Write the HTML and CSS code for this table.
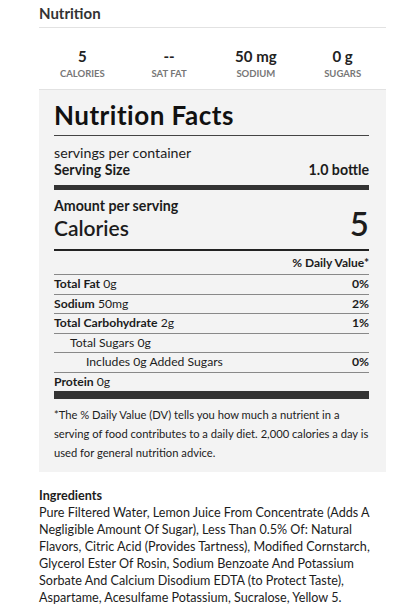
FILE: index.html
```html
<!DOCTYPE html>
<html lang="en">

<head>
    <meta charset="UTF-8">
    <meta name="viewport" content="width=device-width, initial-scale=1.0">
    <title>Nutrition</title>
    <link rel="stylesheet" href="styles.css">
</head>

<body>

    <div class="nutrition">
        <h2 class="section-title">Nutrition</h2>

        <div class="stats">
            <div class="stat">
                <span class="stat-value">5</span>
                <span class="stat-label">Calories</span>
            </div>
            <div class="stat">
                <span class="stat-value">--</span>
                <span class="stat-label">Sat Fat</span>
            </div>
            <div class="stat">
                <span class="stat-value">50 mg</span>
                <span class="stat-label">Sodium</span>
            </div>
            <div class="stat">
                <span class="stat-value">0 g</span>
                <span class="stat-label">Sugars</span>
            </div>
        </div>

        <div class="facts">
            <h1 class="facts-title">Nutrition Facts</h1>

            <div class="servings">
                <p>servings per container</p>
                <div class="line-row bold">
                    <span>Serving Size</span>
                    <span>1.0 bottle</span>
                </div>
            </div>

            <div class="calories">
                <p class="bold">Amount per serving</p>
                <div class="calories-row">
                    <span class="calories-label">Calories</span>
                    <span class="calories-value">5</span>
                </div>
            </div>

            <div class="dv-head bold">% Daily Value*</div>

            <div class="nutrient">
                <span><b>Total Fat</b> 0g</span>
                <b>0%</b>
            </div>
            <div class="nutrient">
                <span><b>Sodium</b> 50mg</span>
                <b>2%</b>
            </div>
            <div class="nutrient">
                <span><b>Total Carbohydrate</b> 2g</span>
                <b>1%</b>
            </div>
            <div class="nutrient indent-1">
                <span>Total Sugars 0g</span>
            </div>
            <div class="nutrient indent-2">
                <span>Includes 0g Added Sugars</span>
                <b>0%</b>
            </div>
            <div class="nutrient last">
                <span><b>Protein</b> 0g</span>
            </div>

            <p class="footnote">*The % Daily Value (DV) tells you how much a nutrient in a serving of food contributes to a daily diet. 2,000 calories a day is used for general nutrition advice.</p>
        </div>

        <div class="ingredients">
            <h3>Ingredients</h3>
            <p>Pure Filtered Water, Lemon Juice From Concentrate (Adds A Negligible Amount Of Sugar), Less Than 0.5% Of: Natural Flavors, Citric Acid (Provides Tartness), Modified Cornstarch, Glycerol Ester Of Rosin, Sodium Benzoate And Potassium Sorbate And Calcium Disodium EDTA (to Protect Taste), Aspartame, Acesulfame Potassium, Sucralose, Yellow 5.</p>
        </div>
    </div>

</body>

</html>
```

FILE: styles.css
```css
body {
    font-family: Lato, "Liberation Sans", sans-serif;
    margin: 0;
    color: #1c1c1c;
    background-color: #fff;
}

p {
    margin: 0;
}

.bold {
    font-weight: 700;
}

.nutrition {
    width: 347px;
    margin-left: 39px;
}

.section-title {
    margin: 0;
    padding-top: 4px;
    padding-bottom: 5px;
    font-size: 15px;
    line-height: 18px;
    font-weight: 700;
    color: #333;
    border-bottom: 1px solid #e2e2e2;
}

.stats {
    display: grid;
    grid-template-columns: repeat(4, 1fr);
    padding: 18.5px 0 9.5px;
    border-bottom: 1px solid #e2e2e2;
}

.stat {
    display: flex;
    flex-direction: column;
    align-items: center;
}

.stat-value {
    font-size: 15px;
    line-height: 18px;
    font-weight: 700;
    color: #222;
}

.stat-label {
    margin-top: 3px;
    font-size: 9.5px;
    line-height: 12px;
    font-weight: 700;
    color: #777;
    text-transform: uppercase;
}

.facts {
    background-color: #f3f3f3;
    padding: 9px 17px 10.5px 15px;
}

.facts-title {
    margin: 0;
    padding-bottom: 4px;
    font-size: 26px;
    line-height: 32px;
    font-weight: 700;
    letter-spacing: 0.5px;
    color: #111;
    border-bottom: 1px solid #444;
}

.servings {
    padding: 7.5px 0 7.5px;
    font-size: 14.2px;
    line-height: 17px;
    border-bottom: 5px solid #333;
}

.line-row {
    display: flex;
    justify-content: space-between;
}

.calories {
    padding: 8px 0 11px;
    border-bottom: 2px solid #222;
}

.calories p {
    font-size: 14.2px;
    line-height: 16px;
}

.calories-row {
    display: flex;
    justify-content: space-between;
    align-items: baseline;
    height: 30px;
    margin-top: -6px;
}

.calories-label {
    font-size: 21px;
    line-height: 30px;
    font-weight: 600;
}

.calories-value {
    font-size: 33px;
    line-height: 30px;
    font-weight: 600;
}

.dv-head {
    text-align: right;
    font-size: 12px;
    line-height: 16px;
    padding: 4px 0 3px;
    border-bottom: 1px solid #888;
}

.nutrient {
    display: flex;
    justify-content: space-between;
    font-size: 12.2px;
    line-height: 18.5px;
    border-bottom: 1px solid #888;
}

.nutrient b {
    font-weight: 700;
}

.indent-1 {
    padding-left: 16px;
}

.indent-2 {
    padding-left: 32px;
}

.nutrient.last {
    border-bottom: 8px solid #333;
}

.footnote {
    padding-top: 5.5px;
    font-size: 11.2px;
    line-height: 19px;
}

.ingredients {
    padding-top: 14.5px;
    font-size: 12.6px;
    line-height: 17px;
}

.ingredients h3 {
    margin: 0;
    font-size: 12.6px;
    line-height: 17px;
    font-weight: 700;
}
```
